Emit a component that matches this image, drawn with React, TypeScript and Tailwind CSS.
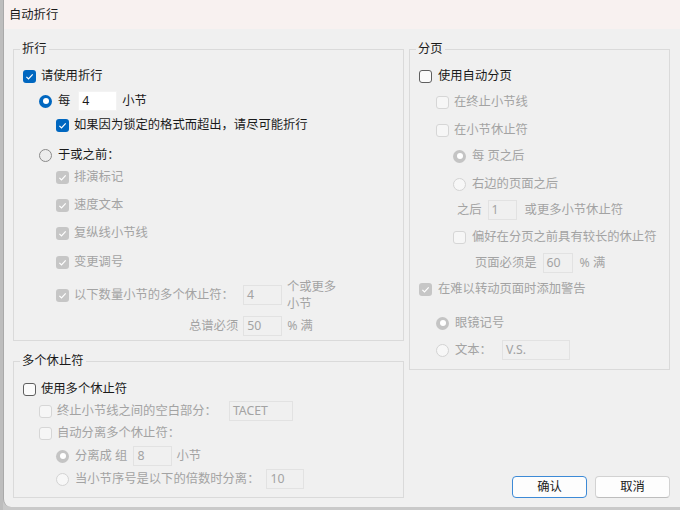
import React from "react";
import clsx from "clsx";

const font = "font-['Noto_Sans','Noto_Sans_CJK_SC',sans-serif]";

function Tick() {
  return (
    <svg viewBox="0 0 13 13" className="w-[13px] h-[13px]">
      <path d="M3.4 6.9l2.1 2.1 4.2-4.6" fill="none" stroke="#fff" strokeWidth="1.2" />
    </svg>
  );
}

function Checkbox({ checked, disabled }: { checked?: boolean; disabled?: boolean }) {
  return (
    <span
      className={clsx(
        "shrink-0 w-[13px] h-[13px] rounded-[3px] flex items-center justify-center",
        checked && !disabled && "bg-[#0067c0]",
        checked && disabled && "bg-[#c6c6c6]",
        !checked && !disabled && "border border-[#5f5f5f] bg-[#fbfbfb]",
        !checked && disabled && "border border-[#d6d6d6] bg-[#f6f6f6]"
      )}
    >
      {checked && <Tick />}
    </span>
  );
}

function Radio({ on, disabled }: { on?: boolean; disabled?: boolean }) {
  return (
    <span
      className={clsx(
        "shrink-0 w-[13px] h-[13px] rounded-full flex items-center justify-center",
        on && !disabled && "bg-[#0067c0]",
        on && disabled && "bg-[#c4c4c4]",
        !on && !disabled && "border border-[#8a8a8a] bg-[#ececec]",
        !on && disabled && "border border-[#d3d3d3] bg-[#f7f7f7]"
      )}
    >
      {on && <span className="w-[6px] h-[6px] rounded-full bg-white" />}
    </span>
  );
}

function Field({ value, w, disabled = true }: { value: string; w: string; disabled?: boolean }) {
  return (
    <span
      className={clsx(
        "h-[20px] flex items-center pl-[3px] shrink-0",
        w,
        disabled
          ? "border border-[#e2e2e2] bg-[#f0f0f0] text-[#a3a3a3]"
          : "border border-[#f3f3f3] bg-white text-[#1a1a1a]"
      )}
    >
      {value}
    </span>
  );
}

function Label({ children, disabled }: { children: React.ReactNode; disabled?: boolean }) {
  return <span className={clsx("whitespace-nowrap", disabled ? "text-[#a3a3a3]" : "text-[#1a1a1a]")}>{children}</span>;
}

function Row({ className, children }: { className: string; children: React.ReactNode }) {
  return <div className={clsx("flex items-center h-[20px]", className)}>{children}</div>;
}

function Group({ title, className, children }: { title: string; className?: string; children: React.ReactNode }) {
  return (
    <fieldset className={clsx("border border-[#dadada] min-w-0", className)}>
      <legend className="ml-[6px] px-[2px] leading-[16px] text-[#1a1a1a]">{title}</legend>
      {children}
    </fieldset>
  );
}

export default function App() {
  return (
    <div className={clsx("w-[680px] h-[510px] flex bg-[#c9c9c9] text-[12.3px] leading-[16px]", font)}>
      <div className="w-[3px] bg-[#bdbdbd]" />
      <div className="flex-1 h-[507px] flex flex-col bg-[#f0f0f0] border-l border-[#a9a9a9] rounded-bl-[8px] overflow-hidden">
        {/* title bar */}
        <div className="h-[29px] shrink-0 bg-[#f8f1f0] pl-[5px] flex items-center text-[#1a1a1a]">自动折行</div>

        <div className="flex-1 flex pl-[9px] pr-[10px] pt-[12px] pb-[9px] gap-[5px]">
          {/* left column */}
          <div className="w-[391px] flex flex-col gap-[12px]">
            <Group title="折行" className="pb-[4px]">
              <Row className="mt-[9px] pl-[9px] gap-[5px]">
                <Checkbox checked />
                <Label>请使用折行</Label>
              </Row>
              <Row className="mt-[5px] pl-[25px]">
                <Radio on />
                <span className="ml-[6px] mr-[8px]"><Label>每</Label></span>
                <Field value="4" w="w-[39px]" disabled={false} />
                <span className="ml-[5px]"><Label>小节</Label></span>
              </Row>
              <Row className="mt-[4px] pl-[42px] gap-[5px]">
                <Checkbox checked />
                <Label>如果因为锁定的格式而超出，请尽可能折行</Label>
              </Row>
              <Row className="mt-[10px] pl-[25px] gap-[6px]">
                <Radio />
                <Label>于或之前：</Label>
              </Row>
              <Row className="mt-[2px] pl-[42px] gap-[5px]">
                <Checkbox checked disabled />
                <Label disabled>排演标记</Label>
              </Row>
              <Row className="mt-[8px] pl-[42px] gap-[5px]">
                <Checkbox checked disabled />
                <Label disabled>速度文本</Label>
              </Row>
              <Row className="mt-[8px] pl-[42px] gap-[5px]">
                <Checkbox checked disabled />
                <Label disabled>复纵线小节线</Label>
              </Row>
              <Row className="mt-[9px] pl-[42px] gap-[5px]">
                <Checkbox checked disabled />
                <Label disabled>变更调号</Label>
              </Row>
              <Row className="mt-[13px] pl-[42px]">
                <Checkbox checked disabled />
                <span className="ml-[5px] mr-[9px]"><Label disabled>以下数量小节的多个休止符：</Label></span>
                <Field value="4" w="w-[39px]" />
                <span className="ml-[5px] flex flex-col leading-[17px] text-[#a3a3a3]">
                  <span>个或更多</span>
                  <span>小节</span>
                </span>
              </Row>
              <Row className="mt-[11px] pl-[175px]">
                <span className="mr-[5px]"><Label disabled>总谱必须</Label></span>
                <Field value="50" w="w-[39px]" />
                <span className="ml-[5px]"><Label disabled>% 满</Label></span>
              </Row>
            </Group>

            <Group title="多个休止符" className="flex-1">
              <Row className="mt-[10px] pl-[9px] gap-[5px]">
                <Checkbox />
                <Label>使用多个休止符</Label>
              </Row>
              <Row className="mt-[2px] pl-[25px]">
                <Checkbox disabled />
                <span className="ml-[5px] mr-[12px]"><Label disabled>终止小节线之间的空白部分：</Label></span>
                <Field value="TACET" w="w-[64px]" />
              </Row>
              <Row className="mt-[2px] pl-[25px] gap-[5px]">
                <Checkbox disabled />
                <Label disabled>自动分离多个休止符：</Label>
              </Row>
              <Row className="mt-[3px] pl-[42px]">
                <Radio on disabled />
                <span className="ml-[6px] mr-[6px]"><Label disabled>分离成 组</Label></span>
                <Field value="8" w="w-[39px]" />
                <span className="ml-[4px]"><Label disabled>小节</Label></span>
              </Row>
              <Row className="mt-[3px] pl-[42px]">
                <Radio disabled />
                <span className="ml-[6px] mr-[7px]"><Label disabled>当小节序号是以下的倍数时分离：</Label></span>
                <Field value="10" w="w-[38px]" />
              </Row>
            </Group>
          </div>

          {/* right column */}
          <div className="w-[261px] flex flex-col">
            <Group title="分页" className="pb-[9px]">
              <Row className="mt-[9px] pl-[9px] gap-[6px]">
                <Checkbox />
                <Label>使用自动分页</Label>
              </Row>
              <Row className="mt-[6px] pl-[26px] gap-[5px]">
                <Checkbox disabled />
                <Label disabled>在终止小节线</Label>
              </Row>
              <Row className="mt-[8px] pl-[26px] gap-[5px]">
                <Checkbox disabled />
                <Label disabled>在小节休止符</Label>
              </Row>
              <Row className="mt-[6px] pl-[43px] gap-[6px]">
                <Radio on disabled />
                <Label disabled>每 页之后</Label>
              </Row>
              <Row className="mt-[8px] pl-[43px] gap-[6px]">
                <Radio disabled />
                <Label disabled>右边的页面之后</Label>
              </Row>
              <Row className="mt-[6px] pl-[47px]">
                <span className="mr-[6px]"><Label disabled>之后</Label></span>
                <Field value="1" w="w-[29px]" />
                <span className="ml-[8px]"><Label disabled>或更多小节休止符</Label></span>
              </Row>
              <Row className="mt-[7px] pl-[43px] gap-[6px]">
                <Checkbox disabled />
                <Label disabled>偏好在分页之前具有较长的休止符</Label>
              </Row>
              <Row className="mt-[6px] pl-[65px]">
                <span className="mr-[6px]"><Label disabled>页面必须是</Label></span>
                <Field value="60" w="w-[30px]" />
                <span className="ml-[7px]"><Label disabled>% 满</Label></span>
              </Row>
              <Row className="mt-[6px] pl-[9px] gap-[6px]">
                <Checkbox checked disabled />
                <Label disabled>在难以转动页面时添加警告</Label>
              </Row>
              <Row className="mt-[14px] pl-[26px] gap-[6px]">
                <Radio on disabled />
                <Label disabled>眼镜记号</Label>
              </Row>
              <Row className="mt-[7px] pl-[26px]">
                <Radio disabled />
                <span className="ml-[6px] mr-[10px]"><Label disabled>文本：</Label></span>
                <Field value="V.S." w="w-[68px]" />
              </Row>
            </Group>

            <div className="mt-auto flex justify-end gap-[8px]">
              <button className="w-[75px] h-[22px] rounded-[4px] border border-[#3d8ad6] bg-[#fdfdfd] text-[#1a1a1a] flex items-center justify-center">
                确认
              </button>
              <button className="w-[75px] h-[22px] rounded-[4px] border border-[#d2d2d2] border-b-[#bdbdbd] bg-[#fdfdfd] text-[#1a1a1a] flex items-center justify-center">
                取消
              </button>
            </div>
          </div>
        </div>
      </div>
    </div>
  );
}
